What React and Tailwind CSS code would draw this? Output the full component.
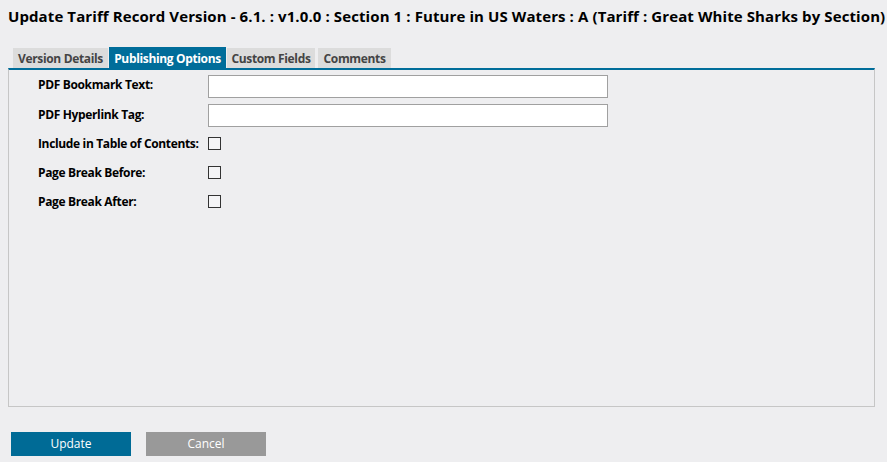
export default function App() {
  const rowsText = ["PDF Bookmark Text:", "PDF Hyperlink Tag:"];
  const rowsCheck = ["Include in Table of Contents:", "Page Break Before:", "Page Break After:"];
  return (
    <div
      className="w-[887px] h-[462px] bg-[#eeeef0] overflow-hidden relative"
      style={{ fontFamily: "'Open Sans', 'Noto Sans', sans-serif" }}
    >
      <div className="pl-[8px] pt-[6px] h-[47px] text-[15px] leading-[20px] font-bold text-black tracking-[0.1px] whitespace-nowrap">
        Update Tariff Record Version - 6.1. : v1.0.0 : Section 1 : Future in US Waters : A (Tariff : Great White Sharks by Section)
      </div>
      <div className="flex items-end ml-[13px] h-[21px] text-[12px] font-bold tracking-[-0.35px] whitespace-nowrap">
        <div className="w-[95px] h-[20px] pt-[2px] bg-[#dcdcdc] text-[#444] flex items-center justify-center mr-[1px]">Version Details</div>
        <div className="w-[117px] h-[21px] pt-[3px] bg-[#006d9a] text-white flex items-center justify-center mr-[1px]">Publishing Options</div>
        <div className="w-[88px] h-[20px] pt-[2px] bg-[#dcdcdc] text-[#444] flex items-center justify-center mr-[3px]">Custom Fields</div>
        <div className="w-[73px] h-[20px] pt-[2px] bg-[#dcdcdc] text-[#444] flex items-center justify-center">Comments</div>
      </div>
      <div className="ml-[8px] w-[867px] h-[339px] border-t-2 border-t-[#006d9a] border-l border-r border-b border-[#c6c6c6]">
        <div className="pl-[29px] pt-[2px] text-[12px] font-bold text-black tracking-[-0.35px] whitespace-nowrap">
          {rowsText.map((l, i) => (
            <div key={l} className="flex items-center h-[29px]">
              <div className={i === 0 ? "w-[170px] -mt-[3px]" : "w-[170px] -mt-[1px]"}>{l}</div>
              <div className="w-[400px] h-[23px] bg-white border border-[#a0a0a0]" />
            </div>
          ))}
          {rowsCheck.map((l) => (
            <div key={l} className="flex items-center h-[29px]">
              <div className="w-[170px] -mt-[1px]">{l}</div>
              <div className="w-[13px] h-[13px] border border-[#333] bg-[#f4f4f6] -mt-[2px]" />
            </div>
          ))}
        </div>
      </div>
      <div className="flex gap-[15px] ml-[11px] mt-[25px]">
        <button className="w-[120px] h-[24px] bg-[#006b96] text-white text-[12px]">Update</button>
        <button className="w-[120px] h-[24px] bg-[#999999] text-white text-[12px]">Cancel</button>
      </div>
    </div>
  );
}
